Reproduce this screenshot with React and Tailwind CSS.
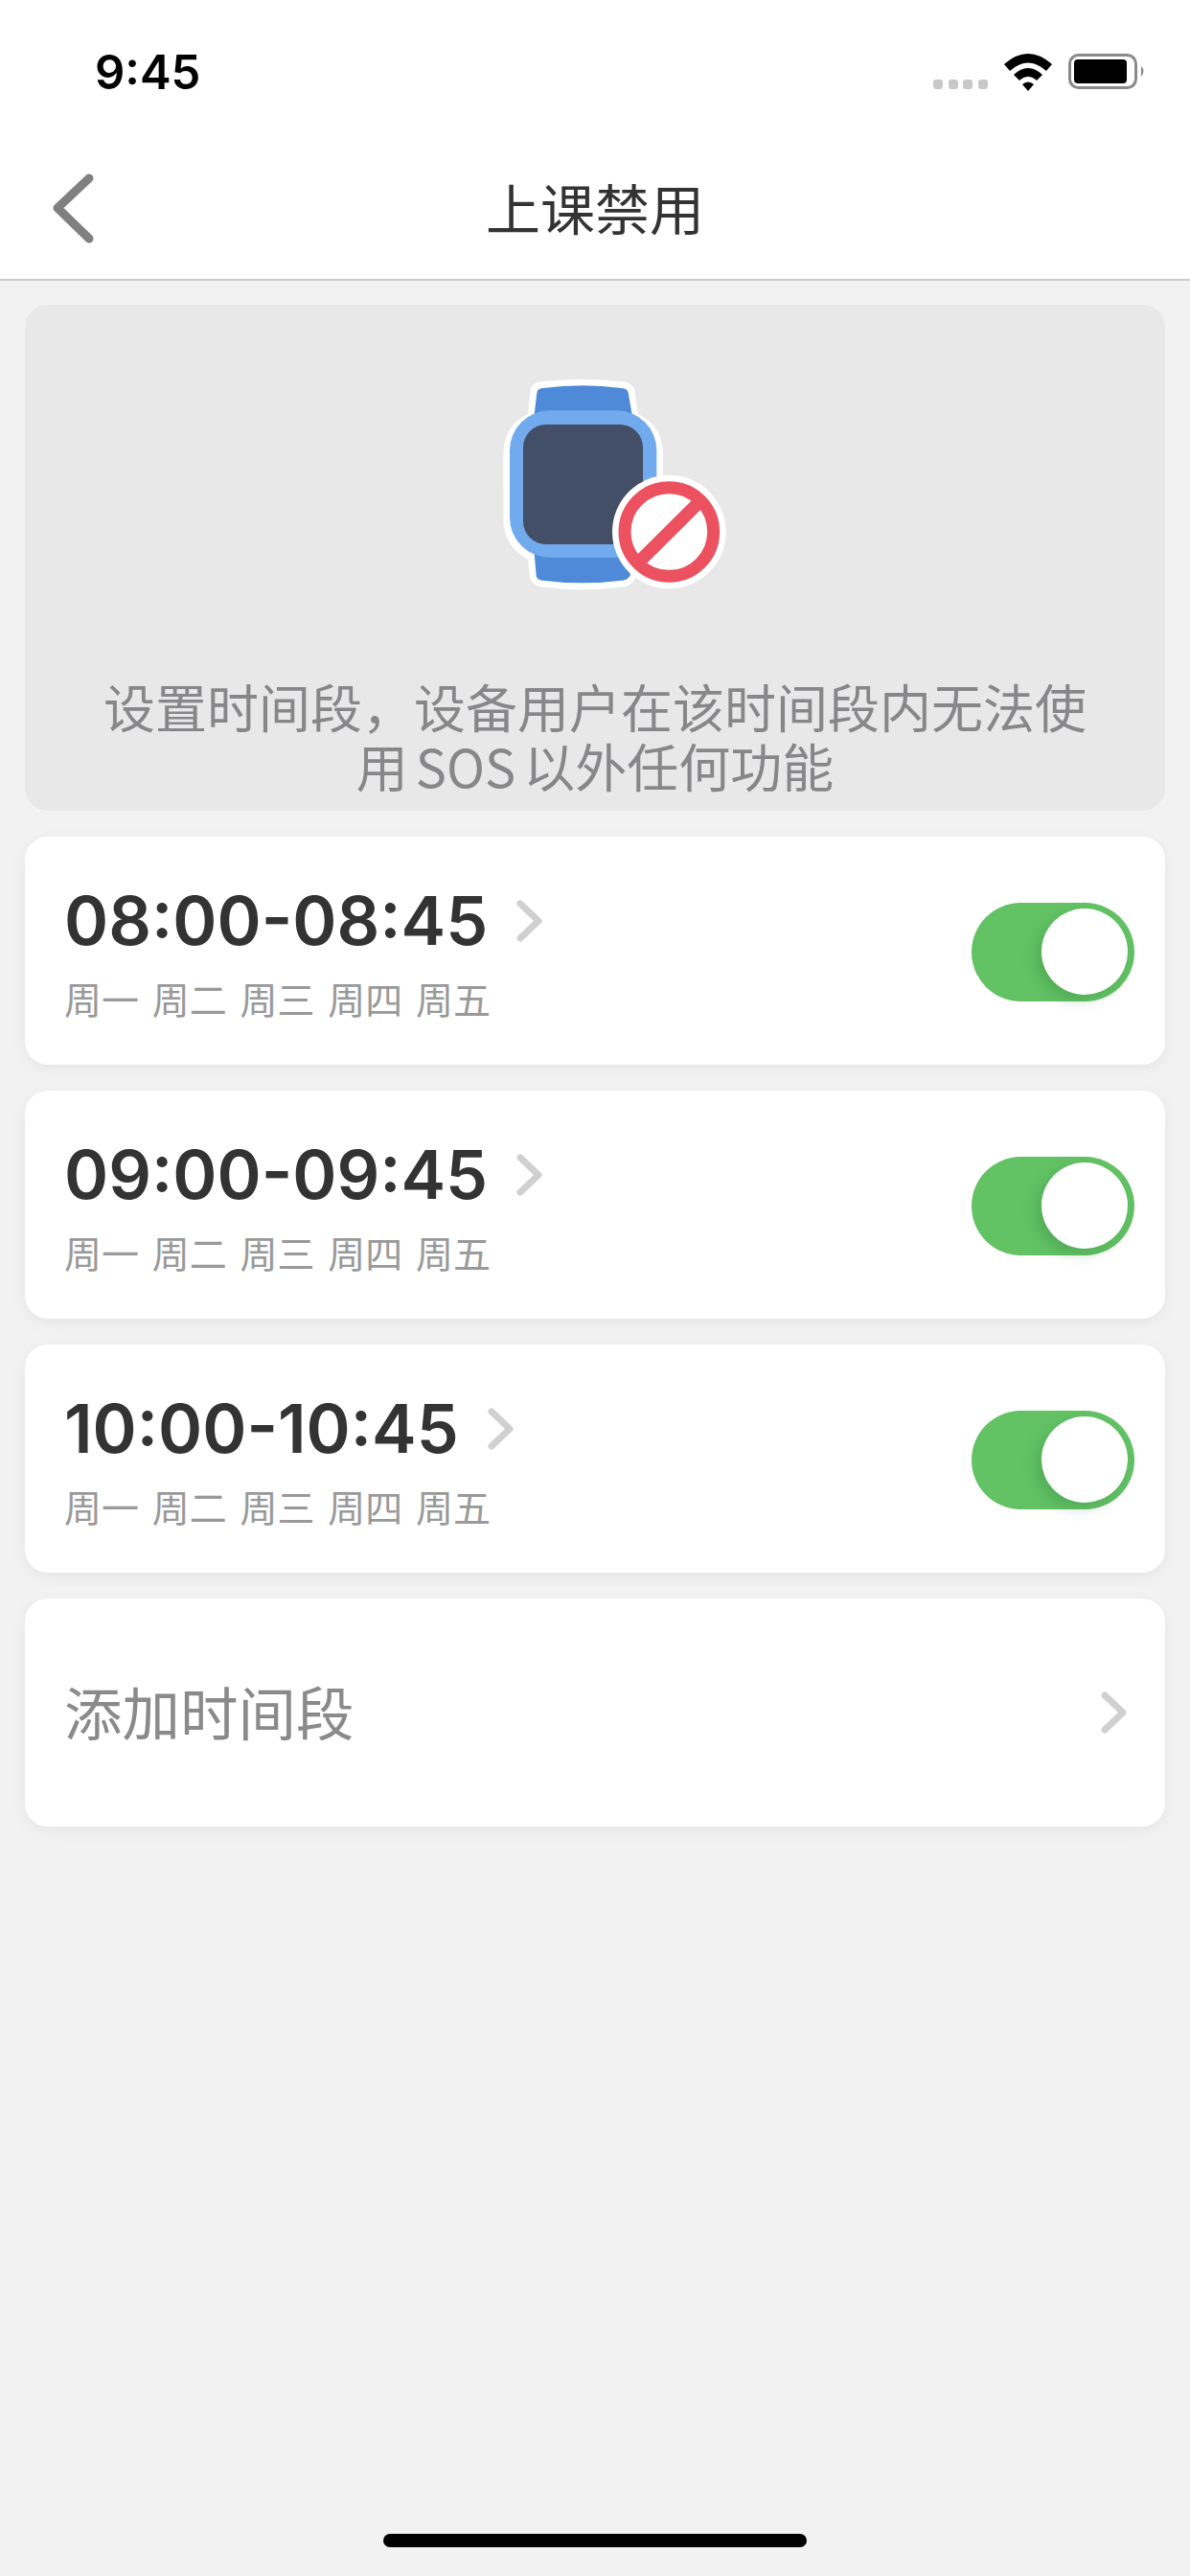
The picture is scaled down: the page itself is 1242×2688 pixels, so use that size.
import React from 'react';

const cjk = { fontFamily: '"Noto Sans CJK SC", sans-serif' };

const Chevron = ({ className }) => (
  <svg viewBox="0 0 27 44" className={className} fill="none" stroke="#d0d0d0" strokeWidth="7" strokeLinecap="round" strokeLinejoin="round">
    <path d="M4 4 L23 22 L4 40" />
  </svg>
);

const WatchIcon = () => (
  <svg viewBox="0 0 960 810" className="w-[320px] h-[270px]">
    <path d="M270 190 L278 115 Q282 92 310 88 Q440 72 570 88 Q598 92 604 115 L615 190 Q693 225 693 320 L693 520 Q693 600 610 645 L606 700 Q600 726 570 730 Q440 748 310 730 Q282 726 276 700 L270 645 Q193 600 193 520 L193 320 Q193 225 270 190 Z" fill="#ffffff" />
    <path d="M290 190 L298 122 Q300 110 316 108 Q440 92 564 108 Q582 110 584 122 L596 190 Z" fill="#4f8ad9" />
    <path d="M290 625 L296 695 Q298 708 316 710 Q440 726 564 710 Q582 708 590 695 L596 625 Z" fill="#4f8ad9" />
    <rect x="213" y="178" width="460" height="460" rx="125" fill="#72aaee" />
    <rect x="255" y="222" width="375" height="375" rx="72" fill="#434f66" />
    <circle cx="712" cy="558" r="178" fill="#ffffff" />
    <circle cx="712" cy="558" r="139" fill="#ffffff" stroke="#ec5160" strokeWidth="39" />
    <path d="M815 456 L610 660" stroke="#ec5160" strokeWidth="41" />
  </svg>
);

const StatusIcons = () => (
  <svg viewBox="0 0 225 50" className="w-[225px] h-[50px] mt-[3px]">
    <g fill="#c8c8c8">
      <rect x="3" y="33" width="10" height="10" rx="3" />
      <rect x="19" y="33" width="10" height="10" rx="3" />
      <rect x="34" y="33" width="10" height="10" rx="3" />
      <rect x="50" y="33" width="10" height="10" rx="3" />
    </g>
    <path d="M77 17 Q102 -5 127 17 L121 24 Q102 7 83 24 Z" fill="#000" />
    <path d="M87 28 Q102 14 117 28 L111 34 Q102 26 93 34 Z" fill="#000" />
    <path d="M96 38 Q102 33 108 38 L102 45 Z" fill="#000" />
    <rect x="145.5" y="7.5" width="69" height="34" rx="9" fill="#fff" stroke="#8a8a8a" strokeWidth="3" />
    <rect x="150" y="12" width="55" height="25" rx="4" fill="#000" />
    <path d="M220 19 Q225 24 220 30 Z" fill="#8a8a8a" />
  </svg>
);

const Toggle = () => (
  <div className="w-[170px] h-[103px] mt-[2px] rounded-full bg-[#62c264] flex items-center justify-end pr-[7px]">
    <div className="w-[90px] h-[90px] rounded-full bg-white shadow-[-6px_6px_14px_rgba(40,110,50,0.25)]" />
  </div>
);

const TimeCard = ({ time }) => (
  <div className="h-[238px] rounded-[24px] bg-white shadow-[0_4px_16px_rgba(0,0,0,0.06)] pl-[41px] pr-[32px] flex items-center justify-between">
    <div className="flex flex-col">
      <div className="flex items-center gap-[30px] h-[84px]">
        <span className="text-[70px] leading-[84px] font-semibold text-[#333333]" style={{ fontFamily: 'Inter, sans-serif' }}>{time}</span>
        <Chevron className="w-[27px] h-[44px]" />
      </div>
      <div className="text-[39px] leading-[50px] mt-[13px] text-[#999999] whitespace-pre [word-spacing:5px]" style={cjk}>周一 周二 周三 周四 周五</div>
    </div>
    <Toggle />
  </div>
);

const App = () => {
  const times = ['08:00-08:45', '09:00-09:45', '10:00-10:45'];

  return (
    <div className="w-[1242px] h-[2688px] bg-[#f2f2f2] flex flex-col">
      <div className="h-[293px] bg-white border-b-2 border-[#cccccc] flex flex-col">
        <div className="h-[145px] pl-[99px] pr-[46px] pt-[47px] flex justify-between items-start">
          <span className="text-[49px] leading-[58px] font-semibold text-black" style={{ fontFamily: 'Inter, sans-serif' }}>9:45</span>
          <StatusIcons />
        </div>
        <div className="flex-1 grid grid-cols-[1fr_auto_1fr] items-center pl-[54px]">
          <svg viewBox="0 0 44 73" className="w-[44px] h-[73px] -mt-[2px]" fill="none" stroke="#808080" strokeWidth="9" strokeLinecap="round" strokeLinejoin="round">
            <path d="M39 5 L6 36 L39 68" />
          </svg>
          <span className="text-[57px] leading-[70px] text-[#333333] -ml-[54px] -mt-[7px]" style={cjk}>上课禁用</span>
        </div>
      </div>

      <div className="px-[26px] pt-[25px] flex flex-col gap-[27px]">
        <div className="h-[528px] rounded-[24px] bg-[#e8e8e8] flex flex-col items-center overflow-hidden">
          <div className="mt-[51px]"><WatchIcon /></div>
          <div className="mt-[67px] w-[1040px] text-center text-[54px] leading-[62px] text-[#87878a] [word-spacing:-4px]" style={cjk}>
            设置时间段，设备用户在该时间段内无法使用 SOS 以外任何功能
          </div>
        </div>

        {times.map((t) => <TimeCard key={t} time={t} />)}

        <div className="h-[238px] rounded-[24px] bg-white shadow-[0_4px_16px_rgba(0,0,0,0.06)] pl-[41px] pr-[40px] flex items-center justify-between">
          <span className="text-[60.5px] leading-[72px] text-[#8a8a8a] -mt-[4px]" style={cjk}>添加时间段</span>
          <Chevron className="w-[27px] h-[44px]" />
        </div>
      </div>

      <div className="mt-auto mb-[30px] mx-auto w-[442px] h-[14px] rounded-full bg-black" />
    </div>
  );
};

export default App;
